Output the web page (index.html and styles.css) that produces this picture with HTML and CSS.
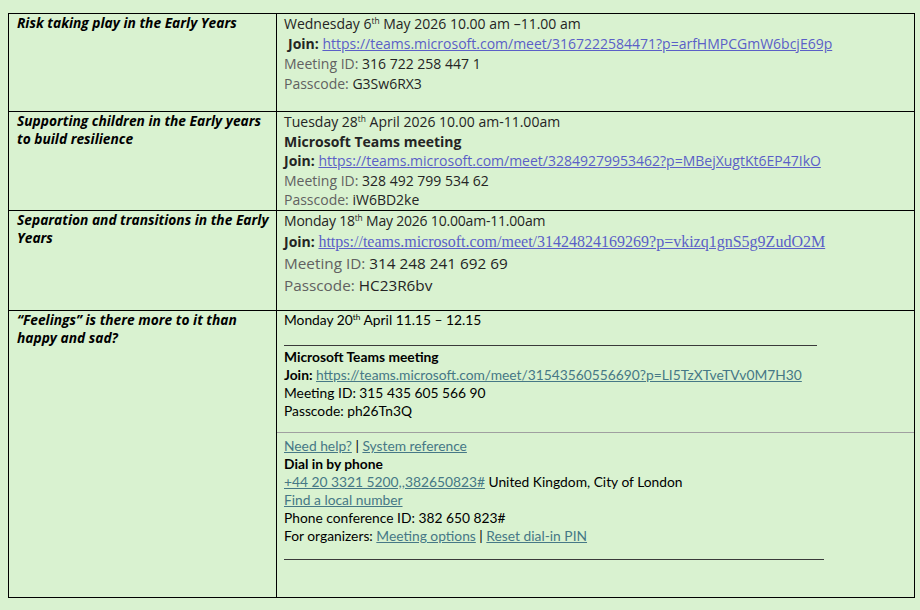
FILE: index.html
```html
<!DOCTYPE html>
<html lang="en">
<head>
<meta charset="utf-8">
<title>Early Years sessions</title>
<link rel="stylesheet" href="styles.css">
</head>
<body>
<table class="sched">
  <tr class="row r1">
    <td class="topic">Risk taking play in the Early Years</td>
    <td class="det seg">
      <div class="ln">Wednesday 6<sup>th</sup> May 2026 10.00 am –11.00 am</div>
      <div class="ln indent"><b>Join:</b> <a class="tl">https://teams.microsoft.com/meet/3167222584471?p=arfHMPCGmW6bcjE69p</a></div>
      <div class="ln"><span class="g">Meeting ID:</span> 316 722 258 447 1</div>
      <div class="ln"><span class="g">Passcode:</span> G3Sw6RX3</div>
    </td>
  </tr>
  <tr class="row r2">
    <td class="topic">Supporting children in the Early years to build resilience</td>
    <td class="det seg">
      <div class="ln">Tuesday 28<sup>th</sup> April 2026 10.00 am-11.00am</div>
      <div class="ln"><b>Microsoft Teams meeting</b></div>
      <div class="ln"><b>Join:</b> <a class="tl">https://teams.microsoft.com/meet/32849279953462?p=MBejXugtKt6EP47IkO</a></div>
      <div class="ln"><span class="g">Meeting ID:</span> 328 492 799 534 62</div>
      <div class="ln"><span class="g">Passcode:</span> iW6BD2ke</div>
    </td>
  </tr>
  <tr class="row r3">
    <td class="topic">Separation and transitions in the Early Years</td>
    <td class="det seg">
      <div class="ln narrow">Monday 18<sup>th</sup> May 2026 10.00am-11.00am</div>
      <div class="ln joinserif"><b>Join:</b> <a class="tl serif">https://teams.microsoft.com/meet/31424824169269?p=vkizq1gnS5g9ZudO2M</a></div>
      <div class="ln big"><span class="g">Meeting ID:</span> 314 248 241 692 69</div>
      <div class="ln big"><span class="g">Passcode:</span> HC23R6bv</div>
    </td>
  </tr>
  <tr class="row r4">
    <td class="topic">“Feelings” is there more to it than happy and sad?</td>
    <td class="det apt">
      <div class="ln">Monday 20<sup>th</sup> April 11.15 – 12.15</div>
      <div class="rule"></div>
      <div class="ln"><b>Microsoft Teams meeting</b></div>
      <div class="ln"><b>Join:</b> <a class="wl">https://teams.microsoft.com/meet/31543560556690?p=LI5TzXTveTVv0M7H30</a></div>
      <div class="ln">Meeting ID: 315 435 605 566 90</div>
      <div class="ln">Passcode: ph26Tn3Q</div>
      <div class="split"></div>
      <div class="ln"><a class="wl">Need help?</a> | <a class="wl">System reference</a></div>
      <div class="ln"><b>Dial in by phone</b></div>
      <div class="ln"><a class="wl">+44 20 3321 5200,,382650823#</a> United Kingdom, City of London</div>
      <div class="ln"><a class="wl">Find a local number</a></div>
      <div class="ln">Phone conference ID: 382 650 823#</div>
      <div class="ln">For organizers: <a class="wl">Meeting options</a> | <a class="wl">Reset dial-in PIN</a></div>
      <div class="rule rule2"></div>
    </td>
  </tr>
</table>
</body>
</html>
```

FILE: styles.css
```css
html, body {
  margin: 0;
  background: #d9f2d0;
}
body {
  padding: 13px 5px 0 8px;
}
.sched {
  border-collapse: collapse;
  width: 907px;
  table-layout: fixed;
}
.sched td {
  border: 1px solid #000;
  vertical-align: top;
  padding: 0;
}
.topic {
  width: 255px;
  padding: 0 4px 0 8px !important;
  font-family: "Open Sans", sans-serif;
  font-weight: 700;
  font-style: italic;
  font-size: 13.75px;
  line-height: 18px;
  color: #000;
}
.det {
  padding: 0 7px 0 7px !important;
  color: #242424;
}
.r1 { height: 98px; }
.r2 { height: 99px; }
.r3 { height: 100px; }
.r4 { height: 287px; }
.seg {
  font-family: "Open Sans", sans-serif;
  font-size: 14px;
}
.seg .ln { line-height: 19.6px; }
.r1 .seg .ln { line-height: 20px; }
.indent { padding-left: 4px; }
.g { color: #616161; }
sup {
  font-size: 0.6em;
  line-height: 0;
  vertical-align: 0.55em;
}
a.tl {
  color: #5b5fc7;
  text-decoration: underline;
}
a.serif {
  font-family: "Liberation Serif", serif;
  font-size: 16px;
}
.joinserif { line-height: 21px !important; }
.narrow { letter-spacing: -0.2px; font-size: 14px; }
.big { font-size: 15.3px; line-height: 22px !important; }
.apt {
  font-family: "Lato", sans-serif;
  font-size: 13.8px;
  color: #000;
}
.apt .ln { line-height: 18px; }
a.wl {
  color: #467886;
  text-decoration: underline;
}
.rule {
  width: 533px;
  border-top: 1px solid #3a3a3a;
  margin: 16px 0 2px;
}
.split {
  margin: 12px -7px 4px;
  border-top: 1px solid #a0a0a0;
}
.rule2 {
  width: 540px;
  margin-top: 14px;
}
```
